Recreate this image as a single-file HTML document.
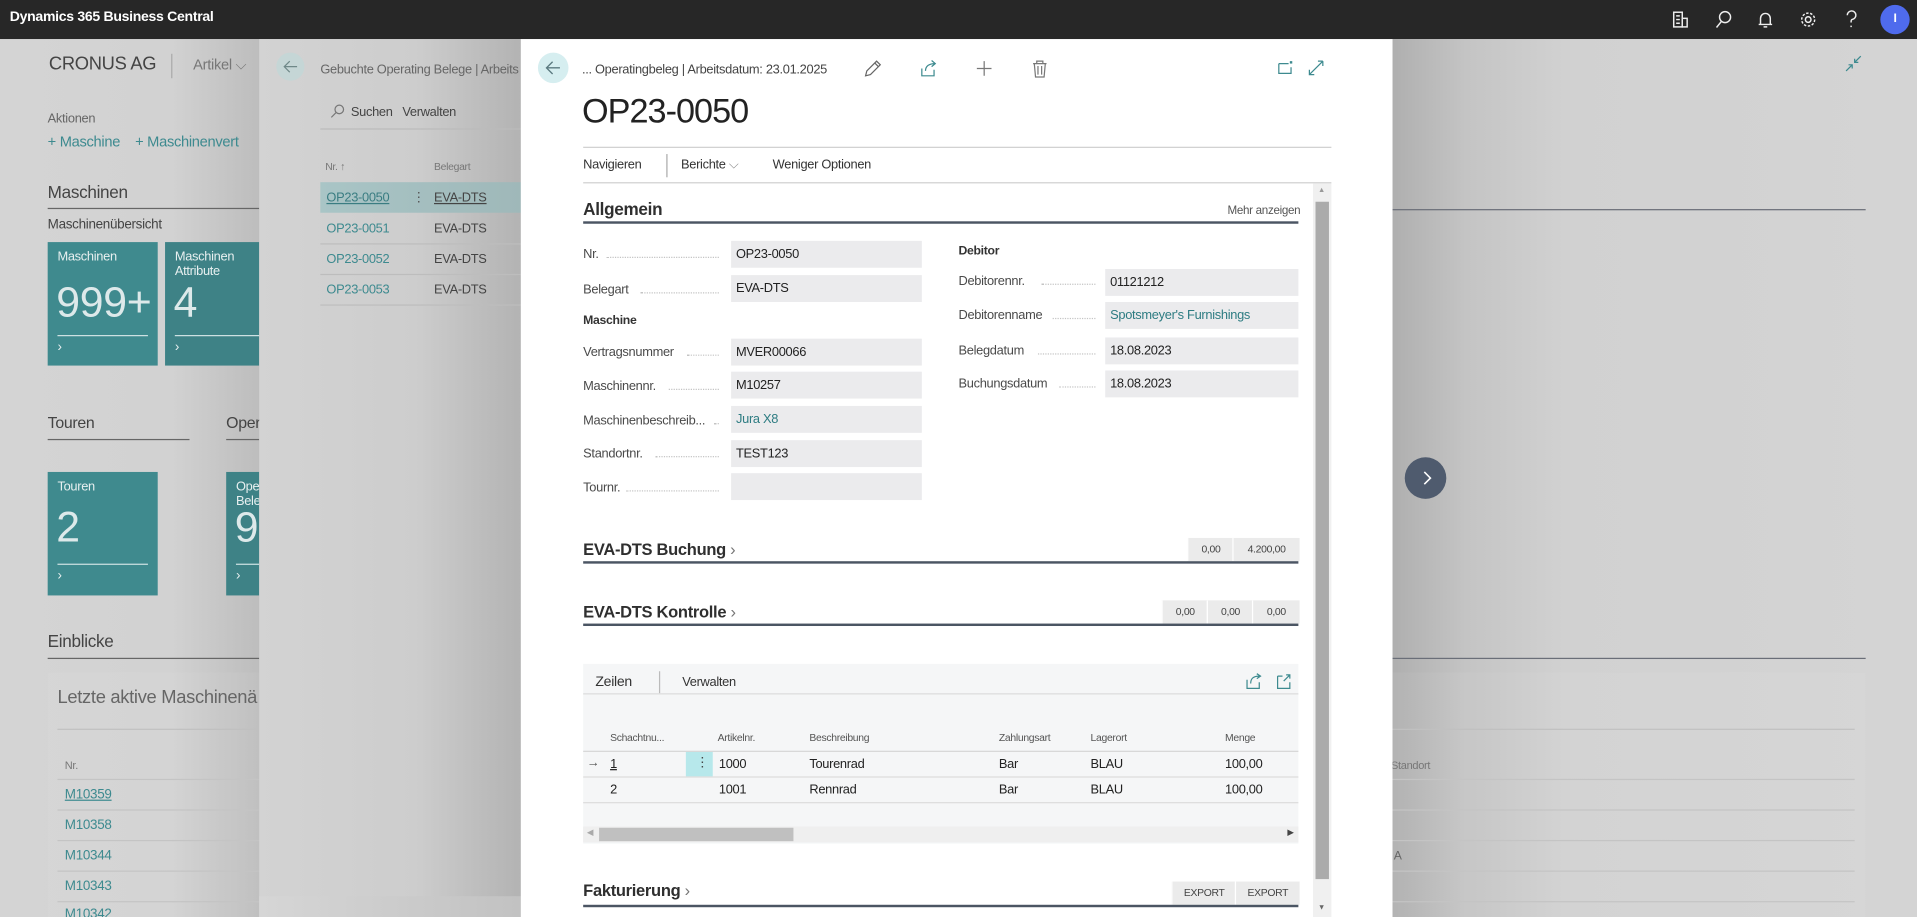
<!DOCTYPE html>
<html><head><meta charset="utf-8">
<style>
html,body{margin:0;padding:0;width:1917px;height:917px;overflow:hidden;background:#d3d3d3}
#s{position:absolute;left:0;top:0;width:1568px;height:750px;transform:scale(1.22258,1.22267);transform-origin:0 0;font-family:"Liberation Sans",sans-serif;color:#333;overflow:hidden;background:#d3d3d3;letter-spacing:-0.25px}
.a{position:absolute;white-space:nowrap}
.teal{color:#2d7c82}
.tile{position:absolute;background:#3f8a8e;color:#e8f0f0}
.tile .t{position:absolute;left:8px;top:6px;font-size:10.5px;line-height:12px}
.tile .n{position:absolute;left:7px;font-size:35px;font-weight:300;color:#dde9ea}
.tile .l{position:absolute;left:8px;right:8px;height:1px;background:#cfe2e3}
.tile .c{position:absolute;left:8px;font-size:11px}
.lab{position:absolute;font-size:10.5px;color:#4a4a4a;white-space:nowrap}
.dots{position:absolute;border-bottom:1.5px dotted #c4c4c4;height:0}
.box{position:absolute;background:#ebebed;font-size:10.5px;color:#222;padding-left:4px;line-height:22px;height:22px;box-sizing:border-box;white-space:nowrap}
.sec{position:absolute;font-size:13.5px;font-weight:bold;color:#2f2f2f}
.secl{position:absolute;height:1.5px;background:#4b5563}
.cb{position:absolute;background:#ebebeb;font-size:8.5px;color:#444;text-align:center;line-height:19px;height:19px;border-left:1px solid #fff}
.th{position:absolute;font-size:8.5px;color:#555;top:598px}
.td{position:absolute;font-size:10.5px;color:#222}
</style></head><body><div id="s">
<div class="a" style="left:0;top:0;width:1568px;height:32px;background:#272727"></div>
<div class="a" style="left:8px;top:8px;font-size:11.5px;font-weight:bold;color:#fff">Dynamics 365 Business Central</div>
<svg class="a" style="left:1365px;top:7px" width="170" height="18" viewBox="0 0 170 18" fill="none" stroke="#eee" stroke-width="1.2">
<rect x="4" y="3" width="7" height="12"/><rect x="11" y="8" width="4" height="7"/><path d="M6 6h3M6 9h3M6 12h3"/>
<circle cx="46" cy="7" r="4.5"/><path d="M43 10.5l-4 5"/>
<path d="M75 13V8a4 4 0 0 1 8 0v5zM73.5 13h11M77.5 15h3"/>
<circle cx="114" cy="9" r="2.3"/><circle cx="114" cy="9" r="5.3" stroke-dasharray="2 1.3"/>
<path d="M146 5.5a3.5 3.5 0 1 1 4 3.4c-.9.4-.9 1-.9 2.5M149.1 14v1.2"/>
</svg>
<div class="a" style="left:1538px;top:4px;width:24px;height:24px;border-radius:50%;background:#4f6bed;color:#fff;font-size:10px;line-height:24px;text-align:center;font-weight:bold">I</div>

<div class="a" style="left:0;top:32px;width:1568px;height:718px;background:linear-gradient(90deg,#d4d4d4 0,#d2d2d2 140px,#bdbdbd 212px)"></div>
<div class="a" style="left:1139px;top:32px;width:429px;height:718px;background:linear-gradient(90deg,#afafaf 0,#c4c4c4 60px,#d1d1d1 140px,#d4d4d4 100%)"></div>
<div class="a" style="left:40px;top:44px;font-size:15px;color:#444">CRONUS AG</div>
<div class="a" style="left:140px;top:44px;width:1px;height:20px;background:#aaa"></div>
<div class="a" style="left:158px;top:46px;font-size:12px;color:#777">Artikel ⌵</div>
<div class="a" style="left:39px;top:91px;font-size:10.5px;color:#666">Aktionen</div>
<div class="a" style="left:39px;top:109px;font-size:12px;color:#3d8a8f">+ Maschine &nbsp;&nbsp;&nbsp;+ Maschinenvert</div>
<div class="a" style="left:39px;top:149px;font-size:14px;color:#444">Maschinen</div>
<div class="a" style="left:39px;top:170px;width:173px;height:1px;background:#666"></div>
<div class="a" style="left:1139px;top:171px;width:387px;height:1px;background:#6a6e78"></div>
<div class="a" style="left:39px;top:178px;font-size:11px;color:#444">Maschinenübersicht</div>
<div class="tile" style="left:39px;top:198px;width:90px;height:101px"><div class="t">Maschinen</div><div class="n" style="top:30px">999+</div><div class="l" style="top:76px"></div><div class="c" style="top:80px">›</div></div>
<div class="tile" style="left:135px;top:198px;width:77px;height:101px;background:#3e8286"><div class="t">Maschinen<br>Attribute</div><div class="n" style="top:30px">4</div><div class="l" style="top:76px;right:0"></div><div class="c" style="top:80px">›</div></div>
<div class="a" style="left:39px;top:338px;font-size:13px;color:#444">Touren</div>
<div class="a" style="left:39px;top:359px;width:116px;height:1px;background:#666"></div>
<div class="a" style="left:185px;top:338px;font-size:13px;color:#444">Oper</div>
<div class="a" style="left:185px;top:359px;width:27px;height:1px;background:#666"></div>
<div class="tile" style="left:39px;top:386px;width:90px;height:101px"><div class="t">Touren</div><div class="n" style="top:26px">2</div><div class="l" style="top:75px"></div><div class="c" style="top:79px">›</div></div>
<div class="tile" style="left:185px;top:386px;width:27px;height:101px;overflow:hidden;background:#3e8286"><div class="t">Ope<br>Bele</div><div class="n" style="top:26px">9</div><div class="l" style="top:75px;right:0"></div><div class="c" style="top:79px">›</div></div>
<div class="a" style="left:39px;top:516px;font-size:14px;color:#444">Einblicke</div>
<div class="a" style="left:39px;top:538px;width:173px;height:1px;background:#666"></div>
<div class="a" style="left:1139px;top:538px;width:387px;height:1px;background:#6a6e78"></div>
<div class="a" style="left:39px;top:550px;width:173px;height:200px;background:rgba(255,255,255,.05)"></div>
<div class="a" style="left:1139px;top:550px;width:387px;height:200px;background:rgba(255,255,255,.05)"></div>
<div class="a" style="left:47px;top:562px;font-size:15px;color:#666">Letzte aktive Maschinenä</div>
<div class="a" style="left:47px;top:596px;width:165px;height:1px;background:#c0c0c0"></div>
<div class="a" style="left:1139px;top:596px;width:378px;height:1px;background:#c0c0c0"></div>
<div class="a" style="left:53px;top:621px;font-size:9px;color:#777">Nr.</div>
<div class="a" style="left:1126px;top:621px;font-size:9px;color:#777">en Standort</div>
<div class="a" style="left:1140px;top:695px;font-size:10px;color:#666">A</div>
<div class="a" style="left:53px;top:644px;font-size:11px;color:#3d8a8f;text-decoration:underline">M10359</div>
<div class="a" style="left:53px;top:669px;font-size:11px;color:#3d8a8f">M10358</div>
<div class="a" style="left:53px;top:694px;font-size:11px;color:#3d8a8f">M10344</div>
<div class="a" style="left:53px;top:719px;font-size:11px;color:#3d8a8f">M10343</div>
<div class="a" style="left:53px;top:742px;font-size:11px;color:#3d8a8f">M10342</div>
<div class="a" style="left:47px;top:637px;width:165px;height:1px;background:#c4c4c4"></div>
<div class="a" style="left:47px;top:662px;width:165px;height:1px;background:#c4c4c4"></div>
<div class="a" style="left:47px;top:687px;width:165px;height:1px;background:#c4c4c4"></div>
<div class="a" style="left:47px;top:712px;width:165px;height:1px;background:#c4c4c4"></div>
<div class="a" style="left:47px;top:737px;width:165px;height:1px;background:#c4c4c4"></div>
<div class="a" style="left:1139px;top:637px;width:378px;height:1px;background:#c4c4c4"></div>
<div class="a" style="left:1139px;top:662px;width:378px;height:1px;background:#c4c4c4"></div>
<div class="a" style="left:1139px;top:687px;width:378px;height:1px;background:#c4c4c4"></div>
<div class="a" style="left:1139px;top:712px;width:378px;height:1px;background:#c4c4c4"></div>
<div class="a" style="left:1139px;top:737px;width:378px;height:1px;background:#c4c4c4"></div>
<svg class="a" style="left:1508px;top:44px" width="16" height="16" viewBox="0 0 16 16" fill="none" stroke="#3d8a8f" stroke-width="1"><path d="M2 14l5-5M4 9h3v3M14 2l-5 5M9 4v3h3"/></svg>
<div class="a" style="left:1149px;top:374px;width:34px;height:34px;border-radius:50%;background:#4f5b6e"></div>
<svg class="a" style="left:1160px;top:384px" width="14" height="14" viewBox="0 0 14 14" fill="none" stroke="#fff" stroke-width="1.3"><path d="M5 2l5 5-5 5"/></svg>

<div class="a" style="left:212px;top:32px;width:214px;height:718px;background:linear-gradient(90deg,#d3d3d3 0,#cdcdcd 60%,#b3b3b3 100%)"></div>
<div class="a" style="left:212px;top:733px;width:214px;height:17px;background:linear-gradient(90deg,#d6d6d6,#c2c2c2)"></div>
<div class="a" style="left:226px;top:43px;width:23px;height:23px;border-radius:50%;background:#c5d6d6"></div>
<svg class="a" style="left:231px;top:48px" width="13" height="13" viewBox="0 0 13 13" fill="none" stroke="#6f8888" stroke-width="1"><path d="M12 6.5H1.5M6 2L1.5 6.5 6 11"/></svg>
<div class="a" style="left:262px;top:51px;font-size:10.5px;color:#666">Gebuchte Operating Belege | Arbeits</div>
<svg class="a" style="left:270px;top:85px" width="12" height="12" viewBox="0 0 12 12" fill="none" stroke="#777" stroke-width="1"><circle cx="7.5" cy="4.5" r="3.5"/><path d="M5 7l-4 4"/></svg>
<div class="a" style="left:287px;top:86px;font-size:10.5px;color:#444">Suchen &nbsp;&nbsp;Verwalten</div>
<div class="a" style="left:262px;top:105px;width:164px;height:1px;background:#bbb"></div>
<div class="a" style="left:266px;top:131px;font-size:8.5px;color:#777">Nr. ↑</div>
<div class="a" style="left:355px;top:131px;font-size:8.5px;color:#777">Belegart</div>
<div class="a" style="left:262px;top:149px;width:164px;height:25px;background:linear-gradient(90deg,#a9c5c6,#9fb8b9)"></div>
<div class="a" style="left:267px;top:156px;font-size:10.5px;color:#3a7d82;text-decoration:underline">OP23-0050</div>
<div class="a" style="left:337px;top:155px;font-size:11px;color:#555">⋮</div>
<div class="a" style="left:355px;top:156px;font-size:10.5px;color:#444;text-decoration:underline">EVA-DTS</div>
<div class="a" style="left:267px;top:181px;font-size:10.5px;color:#3d8a8f">OP23-0051</div><div class="a" style="left:355px;top:181px;font-size:10.5px;color:#444">EVA-DTS</div>
<div class="a" style="left:267px;top:206px;font-size:10.5px;color:#3d8a8f">OP23-0052</div><div class="a" style="left:355px;top:206px;font-size:10.5px;color:#444">EVA-DTS</div>
<div class="a" style="left:267px;top:231px;font-size:10.5px;color:#3d8a8f">OP23-0053</div><div class="a" style="left:355px;top:231px;font-size:10.5px;color:#444">EVA-DTS</div>
<div class="a" style="left:262px;top:199px;width:164px;height:1px;background:#bdbdbd"></div>
<div class="a" style="left:262px;top:224px;width:164px;height:1px;background:#bdbdbd"></div>
<div class="a" style="left:262px;top:249px;width:164px;height:1px;background:#bdbdbd"></div>

<div class="a" style="left:426px;top:32px;width:713px;height:718px;background:#fff"></div>
<div class="a" style="left:440px;top:43px;width:25px;height:25px;border-radius:50%;background:#d6eef0"></div>
<svg class="a" style="left:445px;top:48px" width="15" height="15" viewBox="0 0 15 15" fill="none" stroke="#5b7a80" stroke-width="1.1"><path d="M13 7.5H2M7 2.5l-5 5 5 5"/></svg>
<div class="a" style="left:476px;top:51px;font-size:10.5px;color:#444">... Operatingbeleg | Arbeitsdatum: 23.01.2025</div>
<svg class="a" style="left:706px;top:48px" width="155" height="16" viewBox="0 0 155 16" fill="none" stroke-width="1">
<path d="M2 14l1-4 8-8 3 3-8 8zM9.5 3.5l3 3" stroke="#666"/>
<path d="M48 8v6h10V9M51 10c0-4 3-6 8-6M56 1.5l3 2.5-3 2.5" stroke="#3d8a8f"/>
<path d="M99 2v12M93 8h12" stroke="#777"/>
<path d="M139 4h11M142 4V2h5v2M140 4l1 11h7l1-11M143 6v7M146 6v7" stroke="#777"/>
</svg>
<svg class="a" style="left:1045px;top:48px" width="42" height="14" viewBox="0 0 42 14" fill="none" stroke="#3d8a8f" stroke-width="1"><path d="M1 4h8M1 4v8h10V7"/><rect x="10" y="2" width="2" height="2" fill="#3d8a8f" stroke="none"/><path d="M26 13l11-11M26 9v4h4M37 2v4M37 2h-4"/></svg>
<div class="a" style="left:476px;top:75px;font-size:28px;font-weight:300;color:#222;letter-spacing:-.8px">OP23-0050</div>
<div class="a" style="left:477px;top:120px;width:612px;height:1px;background:#d0d0d0"></div>
<div class="a" style="left:477px;top:129px;font-size:10.5px;color:#333">Navigieren</div>
<div class="a" style="left:545px;top:126px;width:1px;height:19px;background:#aaa"></div>
<div class="a" style="left:557px;top:129px;font-size:10.5px;color:#333">Berichte <span style="color:#888">⌵</span></div>
<div class="a" style="left:632px;top:129px;font-size:10.5px;color:#333">Weniger Optionen</div>
<div class="a" style="left:477px;top:149px;width:612px;height:1px;background:#d0d0d0"></div>
<div class="a" style="left:1074px;top:150px;width:15px;height:600px;background:#f0f0f0"></div>
<div class="a" style="left:1076px;top:165px;width:11px;height:554px;background:#ababab"></div>
<div class="a" style="left:1078px;top:153px;font-size:6px;color:#999">▲</div>
<div class="a" style="left:1078px;top:740px;font-size:6px;color:#666">▼</div>

<div class="sec" style="left:477px;top:163px;font-size:14px">Allgemein</div>
<div class="a" style="left:1004px;top:167px;font-size:9.5px;color:#555">Mehr anzeigen</div>
<div class="secl" style="left:477px;top:181px;width:585px"></div>

<div class="lab" style="left:477px;top:202px">Nr.</div><div class="dots" style="left:496px;top:210px;width:92px"></div><div class="box" style="left:598px;top:197px;width:156px">OP23-0050</div>
<div class="lab" style="left:477px;top:231px">Belegart</div><div class="dots" style="left:524px;top:239px;width:64px"></div><div class="box" style="left:598px;top:225px;width:156px">EVA-DTS</div>
<div class="lab" style="left:477px;top:257px;font-weight:bold;color:#333;font-size:10px">Maschine</div>
<div class="lab" style="left:477px;top:282px">Vertragsnummer</div><div class="dots" style="left:562px;top:290px;width:26px"></div><div class="box" style="left:598px;top:277px;width:156px">MVER00066</div>
<div class="lab" style="left:477px;top:310px">Maschinennr.</div><div class="dots" style="left:547px;top:318px;width:41px"></div><div class="box" style="left:598px;top:304px;width:156px">M10257</div>
<div class="lab" style="left:477px;top:338px">Maschinenbeschreib...</div><div class="dots" style="left:584px;top:346px;width:4px"></div><div class="box" style="left:598px;top:332px;width:156px;color:#2d7c82">Jura X8</div>
<div class="lab" style="left:477px;top:365px">Standortnr.</div><div class="dots" style="left:536px;top:373px;width:52px"></div><div class="box" style="left:598px;top:360px;width:156px">TEST123</div>
<div class="lab" style="left:477px;top:393px">Tournr.</div><div class="dots" style="left:512px;top:401px;width:76px"></div><div class="box" style="left:598px;top:387px;width:156px"></div>

<div class="lab" style="left:784px;top:200px;font-weight:bold;color:#333;font-size:10px">Debitor</div>
<div class="lab" style="left:784px;top:224px">Debitorennr.</div><div class="dots" style="left:852px;top:232px;width:44px"></div><div class="box" style="left:904px;top:220px;width:158px">01121212</div>
<div class="lab" style="left:784px;top:252px">Debitorenname</div><div class="dots" style="left:861px;top:260px;width:35px"></div><div class="box" style="left:904px;top:247px;width:158px;color:#2d7c82">Spotsmeyer's Furnishings</div>
<div class="lab" style="left:784px;top:281px">Belegdatum</div><div class="dots" style="left:849px;top:289px;width:47px"></div><div class="box" style="left:904px;top:276px;width:158px">18.08.2023</div>
<div class="lab" style="left:784px;top:308px">Buchungsdatum</div><div class="dots" style="left:866px;top:316px;width:30px"></div><div class="box" style="left:904px;top:303px;width:158px">18.08.2023</div>

<div class="sec" style="left:477px;top:442px">EVA-DTS Buchung <span style="font-weight:normal;color:#777">›</span></div>
<div class="cb" style="left:971px;top:440px;width:37px">0,00</div><div class="cb" style="left:1008px;top:440px;width:54px">4.200,00</div>
<div class="secl" style="left:477px;top:459px;width:585px"></div>
<div class="sec" style="left:477px;top:493px">EVA-DTS Kontrolle <span style="font-weight:normal;color:#777">›</span></div>
<div class="cb" style="left:950px;top:491px;width:37px">0,00</div><div class="cb" style="left:987px;top:491px;width:37px">0,00</div><div class="cb" style="left:1024px;top:491px;width:38px">0,00</div>
<div class="secl" style="left:477px;top:510px;width:585px"></div>

<div class="a" style="left:477px;top:543px;width:585px;height:147px;background:#f5f6f7"></div>
<div class="a" style="left:487px;top:552px;font-size:11.5px;color:#333">Zeilen</div>
<div class="a" style="left:539px;top:549px;width:1px;height:18px;background:#bbb"></div>
<div class="a" style="left:558px;top:552px;font-size:10.5px;color:#333">Verwalten</div>
<svg class="a" style="left:1019px;top:550px" width="40" height="14" viewBox="0 0 40 14" fill="none" stroke="#3d8a8f" stroke-width="1"><path d="M1 6v7h10V8M4 9c0-4 2-6 7-6M9 1l3 2-3 2"/><path d="M26 3h4M26 3v10h10V8M33 2h3v3M36 2l-5 5"/></svg>
<div class="a" style="left:477px;top:567px;width:585px;height:1px;background:#dcdcdc"></div>
<div class="th" style="left:499px">Schachtnu...</div>
<div class="th" style="left:587px">Artikelnr.</div>
<div class="th" style="left:662px">Beschreibung</div>
<div class="th" style="left:817px">Zahlungsart</div>
<div class="th" style="left:892px">Lagerort</div>
<div class="th" style="left:1002px">Menge</div>
<div class="a" style="left:477px;top:614px;width:585px;height:1px;background:#d6d6d6"></div>
<div class="a" style="left:561px;top:615px;width:22px;height:20px;background:#b7e8eb"></div>
<div class="a" style="left:569px;top:617px;font-size:11px;color:#444">⋮</div>
<div class="td" style="left:480px;top:618px;color:#555">→</div>
<div class="td" style="left:499px;top:619px;text-decoration:underline">1</div>
<div class="td" style="left:588px;top:619px">1000</div><div class="td" style="left:662px;top:619px">Tourenrad</div><div class="td" style="left:817px;top:619px">Bar</div><div class="td" style="left:892px;top:619px">BLAU</div><div class="td" style="left:1002px;top:619px">100,00</div>
<div class="a" style="left:477px;top:635px;width:585px;height:1px;background:#dcdcdc"></div>
<div class="td" style="left:499px;top:640px">2</div>
<div class="td" style="left:588px;top:640px">1001</div><div class="td" style="left:662px;top:640px">Rennrad</div><div class="td" style="left:817px;top:640px">Bar</div><div class="td" style="left:892px;top:640px">BLAU</div><div class="td" style="left:1002px;top:640px">100,00</div>
<div class="a" style="left:477px;top:656px;width:585px;height:1px;background:#dcdcdc"></div>
<div class="a" style="left:477px;top:676px;width:585px;height:13px;background:#efefef"></div>
<div class="a" style="left:490px;top:677px;width:159px;height:11px;background:#c0c0c0"></div>
<div class="a" style="left:480px;top:677px;font-size:7px;color:#aaa">◀</div>
<div class="a" style="left:1053px;top:677px;font-size:7px;color:#444">▶</div>

<div class="sec" style="left:477px;top:721px">Fakturierung <span style="font-weight:normal;color:#777">›</span></div>
<div class="cb" style="left:958px;top:721px;width:52px">EXPORT</div><div class="cb" style="left:1010px;top:721px;width:52px">EXPORT</div>
<div class="secl" style="left:477px;top:740px;width:585px"></div>
</div></body></html>
